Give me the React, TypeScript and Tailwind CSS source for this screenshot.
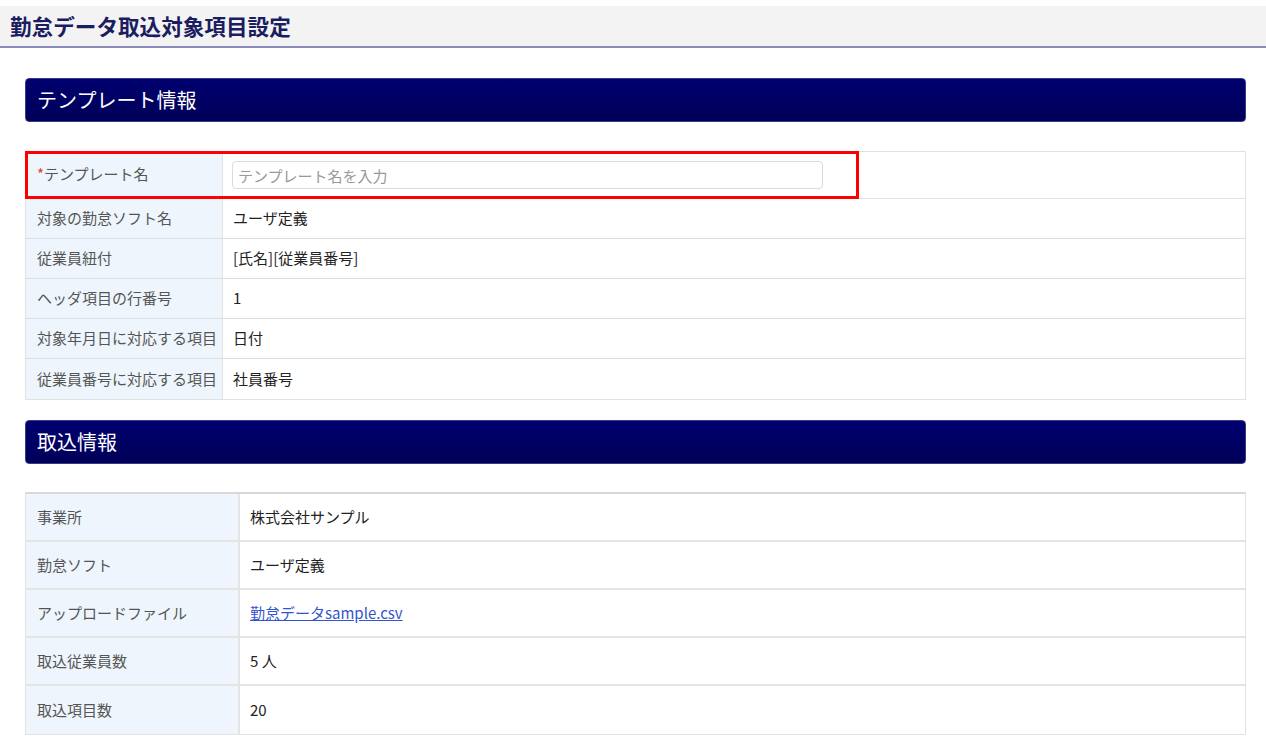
import React from 'react';

const font = { fontFamily: '"Noto Sans CJK JP", "Noto Sans", sans-serif' };

function SectionHeader({ title }: { title: string }) {
  return (
    <div className="h-[44px] rounded-[4px] bg-gradient-to-b from-[#000070] to-[#000058] border border-[#3a3a8a] flex items-center px-[11px]">
      <span className="text-white text-[20px] leading-none">{title}</span>
    </div>
  );
}

type Row = { label: string; value: React.ReactNode };

const templateRows: Row[] = [
  { label: '対象の勤怠ソフト名', value: 'ユーザ定義' },
  { label: '従業員紐付', value: '[氏名][従業員番号]' },
  { label: 'ヘッダ項目の行番号', value: '1' },
  { label: '対象年月日に対応する項目', value: '日付' },
  { label: '従業員番号に対応する項目', value: '社員番号' },
];

const importRows: Row[] = [
  { label: '事業所', value: '株式会社サンプル' },
  { label: '勤怠ソフト', value: 'ユーザ定義' },
  {
    label: 'アップロードファイル',
    value: <a className="text-[#3355cc] underline" href="#">勤怠データsample.csv</a>,
  },
  { label: '取込従業員数', value: '5 人' },
  { label: '取込項目数', value: '20' },
];

export default function App() {
  return (
    <div className="min-h-screen bg-white pt-[6px]" style={font}>
      {/* ページタイトル */}
      <div className="h-[42px] bg-[#f3f3f3] border-b-2 border-[#8c8cbc] flex items-center px-[10px]">
        <h1 className="text-[21.6px] font-bold text-[#1c1c60] leading-none">勤怠データ取込対象項目設定</h1>
      </div>

      <div className="px-[25px] pt-[30px]">
        <div className="w-[1221px]">
          <SectionHeader title="テンプレート情報" />

          {/* テンプレート情報テーブル */}
          <div className="relative mt-[29px] border border-[#e2e2e2]">
            <div className="flex h-[47px] border-b border-[#e2e2e2]">
              <div className="w-[197px] shrink-0 bg-[#eef5fc] border-r border-[#e2e2e2] flex items-center px-[11px] pb-[2px] text-[15px] text-[#555]">
                <span className="text-[#e04040]">*</span>テンプレート名
              </div>
              <div className="flex-1 flex items-center px-[9px]">
                <input
                  className="w-[591px] h-[28px] border border-[#dcdcdc] rounded-[4px] px-[5px] text-[15px] text-[#333] placeholder:text-[#999] outline-none"
                  placeholder="テンプレート名を入力"
                  style={font}
                />
              </div>
            </div>
            {templateRows.map((r, i) => (
              <div
                key={r.label}
                className={`flex h-[40px] ${i < templateRows.length - 1 ? 'border-b border-[#dedede]' : ''}`}
              >
                <div className="w-[197px] shrink-0 bg-[#eef5fc] border-r border-[#e2e2e2] flex items-center px-[11px] text-[15px] text-[#555] whitespace-nowrap">
                  {r.label}
                </div>
                <div className="flex-1 flex items-center px-[10px] text-[15px] text-[#222]">{r.value}</div>
              </div>
            ))}
            {/* 必須項目の強調枠 */}
            <div className="absolute left-[-1px] top-[-1px] w-[834px] h-[48px] border-[3px] border-[#ff0000] pointer-events-none" />
          </div>

          <div className="mt-[20px]">
            <SectionHeader title="取込情報" />
          </div>

          {/* 取込情報テーブル */}
          <div className="mt-[28px] border border-[#e2e2e2] border-t-2 border-t-[#d8d8d8]">
            {importRows.map((r, i) => (
              <div
                key={r.label}
                className={`flex h-[48px] ${i < importRows.length - 1 ? 'border-b-2 border-[#e4e4e4]' : ''}`}
              >
                <div className="w-[214px] shrink-0 bg-[#eef5fc] border-r-2 border-[#e4e4e4] flex items-center px-[11px] text-[15px] text-[#555]">
                  {r.label}
                </div>
                <div className="flex-1 flex items-center px-[10px] text-[15px] text-[#222]">{r.value}</div>
              </div>
            ))}
          </div>
        </div>
      </div>
    </div>
  );
}
